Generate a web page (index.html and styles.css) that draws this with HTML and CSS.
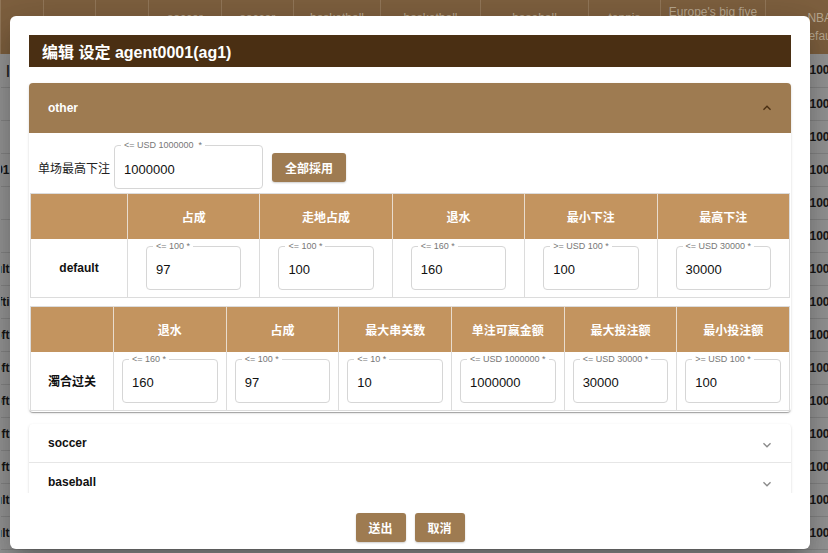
FILE: index.html
```html
<!DOCTYPE html>
<html lang="zh">
<head>
<meta charset="utf-8">
<title>编辑 设定</title>
<link rel="stylesheet" href="styles.css">
</head>
<body>
<div class="page">
  <table class="bg">
    <colgroup>
      <col class="c43"><col class="c52"><col class="c53"><col class="c73"><col class="c72"><col class="c87"><col class="c100"><col class="c108"><col class="c72"><col class="c105"><col class="c108">
    </colgroup>
    <thead>
      <tr>
        <th></th><th>ID</th><th>名称</th><th>soccer<br>default</th><th>soccer<br>default</th><th>basketball<br>default</th><th>basketball<br>default</th><th>baseball<br>default</th><th>tennis<br>default</th><th class="three">Europe's big five<br>leagues<br>default</th><th>NBA<br>default</th>
      </tr>
    </thead>
    <tbody>
      <tr><td><span class="lft">|</span></td><td></td><td></td><td></td><td></td><td></td><td></td><td></td><td></td><td></td><td>100</td></tr>
      <tr><td></td><td></td><td></td><td></td><td></td><td></td><td></td><td></td><td></td><td></td><td>100</td></tr>
      <tr><td></td><td></td><td></td><td></td><td></td><td></td><td></td><td></td><td></td><td></td><td>100</td></tr>
      <tr><td><span class="lft">agent0001</span></td><td></td><td></td><td></td><td></td><td></td><td></td><td></td><td></td><td></td><td>100</td></tr>
      <tr><td></td><td></td><td></td><td></td><td></td><td></td><td></td><td></td><td></td><td></td><td>100</td></tr>
      <tr><td></td><td></td><td></td><td></td><td></td><td></td><td></td><td></td><td></td><td></td><td>100</td></tr>
      <tr><td><span class="lft">default</span></td><td></td><td></td><td></td><td></td><td></td><td></td><td></td><td></td><td></td><td>100</td></tr>
      <tr><td><span class="lft">softi</span></td><td></td><td></td><td></td><td></td><td></td><td></td><td></td><td></td><td></td><td>100</td></tr>
      <tr><td><span class="lft">soft</span></td><td></td><td></td><td></td><td></td><td></td><td></td><td></td><td></td><td></td><td>100</td></tr>
      <tr><td><span class="lft">soft</span></td><td></td><td></td><td></td><td></td><td></td><td></td><td></td><td></td><td></td><td>100</td></tr>
      <tr><td><span class="lft">soft</span></td><td></td><td></td><td></td><td></td><td></td><td></td><td></td><td></td><td></td><td>100</td></tr>
      <tr><td><span class="lft">ag1@ft</span></td><td></td><td></td><td></td><td></td><td></td><td></td><td></td><td></td><td></td><td>100</td></tr>
      <tr><td><span class="lft">ag2@ft</span></td><td></td><td></td><td></td><td></td><td></td><td></td><td></td><td></td><td></td><td>100</td></tr>
      <tr><td><span class="lft">default</span></td><td></td><td></td><td></td><td></td><td></td><td></td><td></td><td></td><td></td><td>100</td></tr>
      <tr><td><span class="lft">default</span></td><td></td><td></td><td></td><td></td><td></td><td></td><td></td><td></td><td></td><td>100</td></tr>
    </tbody>
  </table>

  <div class="modal">
    <div class="title">编辑 设定 agent0001(ag1)</div>
    <div class="body">
      <div class="acc expanded">
        <div class="acc-head dark">
          <span>other</span>
          <svg class="chev" width="16" height="16" viewBox="0 0 24 24"><path d="M7.41 15.41 12 10.83l4.59 4.58L18 14l-6-6-6 6z" fill="#4a2f13"/></svg>
        </div>
        <div class="acc-panel">
          <div class="top-row">
            <span class="lbl">单场最高下注</span>
            <div class="field wide"><span class="legend">&lt;= USD 1000000 &nbsp;*</span><span class="val">1000000</span></div>
            <button class="btn">全部採用</button>
          </div>
          <table class="grid t1">
            <colgroup><col class="first1"><col><col><col><col><col></colgroup>
            <tr class="hd"><th></th><th>占成</th><th>走地占成</th><th>退水</th><th>最小下注</th><th>最高下注</th></tr>
            <tr class="bd">
              <td class="rowname">default</td>
              <td><div class="field"><span class="legend">&lt;= 100 *</span><span class="val">97</span></div></td>
              <td><div class="field"><span class="legend">&lt;= 100 *</span><span class="val">100</span></div></td>
              <td><div class="field"><span class="legend">&lt;= 160 *</span><span class="val">160</span></div></td>
              <td><div class="field"><span class="legend">&gt;= USD 100 *</span><span class="val">100</span></div></td>
              <td><div class="field"><span class="legend">&lt;= USD 30000 *</span><span class="val">30000</span></div></td>
            </tr>
          </table>
          <table class="grid t2">
            <colgroup><col class="first2"><col><col><col><col><col><col></colgroup>
            <tr class="hd"><th></th><th>退水</th><th>占成</th><th>最大串关数</th><th>单注可赢金额</th><th>最大投注额</th><th>最小投注额</th></tr>
            <tr class="bd">
              <td class="rowname">濁合过关</td>
              <td><div class="field"><span class="legend">&lt;= 160 *</span><span class="val">160</span></div></td>
              <td><div class="field"><span class="legend">&lt;= 100 *</span><span class="val">97</span></div></td>
              <td><div class="field"><span class="legend">&lt;= 10 *</span><span class="val">10</span></div></td>
              <td><div class="field"><span class="legend">&lt;= USD 1000000 *</span><span class="val">1000000</span></div></td>
              <td><div class="field"><span class="legend">&lt;= USD 30000 *</span><span class="val">30000</span></div></td>
              <td><div class="field"><span class="legend">&gt;= USD 100 *</span><span class="val">100</span></div></td>
            </tr>
          </table>
        </div>
      </div>
      <div class="acc collapsed">
        <div class="acc-head light">
          <span>soccer</span>
          <svg class="chev" width="16" height="16" viewBox="0 0 24 24"><path d="M7.41 8.59 12 13.17l4.59-4.58L18 10l-6 6-6-6z" fill="#8a8a8a"/></svg>
        </div>
        <div class="acc-head light divided">
          <span>baseball</span>
          <svg class="chev" width="16" height="16" viewBox="0 0 24 24"><path d="M7.41 8.59 12 13.17l4.59-4.58L18 10l-6 6-6-6z" fill="#8a8a8a"/></svg>
        </div>
      </div>
    </div>
    <div class="footer">
      <button class="btn">送出</button>
      <button class="btn">取消</button>
    </div>
  </div>
</div>
</body>
</html>
```
FILE: styles.css
```css
* { box-sizing: border-box; }
html, body { margin: 0; padding: 0; }
body {
  width: 828px;
  height: 553px;
  overflow: hidden;
  font-family: "Liberation Sans", "Noto Sans CJK SC", sans-serif;
  background: #979797;
}
.page {
  position: relative;
  width: 828px;
  height: 553px;
  overflow: hidden;
}

/* dimmed background table */
.bg {
  border-collapse: collapse;
  table-layout: fixed;
  width: 873px;
}
.c43 { width: 43px; } .c52 { width: 52px; } .c53 { width: 53px; }
.c73 { width: 73px; } .c72 { width: 72px; } .c87 { width: 87px; }
.c100 { width: 100px; } .c108 { width: 108px; } .c105 { width: 105px; }
.bg th {
  height: 54px;
  background: #7e603f;
  color: #b8a78f;
  font-size: 12px;
  font-weight: normal;
  line-height: 18px;
  border-left: 1px solid #927759;
  text-align: center;
  vertical-align: middle;
  padding: 0;
}
.bg th.three { line-height: 15px; font-size: 12px; }
.bg td {
  height: 33px;
  background: #979797;
  border-bottom: 1px solid #858585;
  color: #161616;
  font-size: 12px;
  font-weight: bold;
  text-align: center;
  overflow: hidden;
  white-space: nowrap;
  padding: 0;
}
.lft {
  display: flex;
  justify-content: flex-end;
  width: 9px;
  white-space: nowrap;
}

/* modal */
.modal {
  position: absolute;
  left: 10px;
  top: 16px;
  width: 800px;
  height: 533px;
  background: #fff;
  border-radius: 6px;
  padding: 19px 19px 0;
  box-shadow: 0 11px 15px -7px rgba(0,0,0,.2), 0 24px 38px 3px rgba(0,0,0,.14), 0 9px 46px 8px rgba(0,0,0,.12);
  display: flex;
  flex-direction: column;
}
.title {
  height: 32px;
  background: #4a2f13;
  color: #fff;
  font-size: 16px;
  font-weight: bold;
  display: flex;
  align-items: center;
  padding-left: 13px;
  flex: none;
}
.body {
  height: 426px;
  flex: none;
  overflow: hidden;
  margin: 0 -19px;
  padding: 16px 19px 0;
}
.acc {
  border-radius: 4px;
  background: #fff;
  box-shadow: 0 2px 1px -1px rgba(0,0,0,.2), 0 1px 1px 0 rgba(0,0,0,.14), 0 1px 3px 0 rgba(0,0,0,.12);
}
.acc.expanded { margin-bottom: 12px; }
.acc-head {
  display: flex;
  align-items: center;
  justify-content: space-between;
  padding: 0 16px 0 19px;
  font-size: 12px;
  font-weight: bold;
}
.acc-head.dark {
  height: 50px;
  background: #9e7b51;
  color: #fff;
  border-radius: 4px 4px 0 0;
  padding-bottom: 1px;
}
.acc-head.light {
  height: 38px;
  color: #111;
}
.acc-head.light .chev { margin-top: 4px; }
.acc-head.divided { border-top: 1px solid #e6e6e6; }
.chev { display: block; }

.acc-panel { padding: 12px 1px 1px; }
.top-row {
  display: flex;
  align-items: center;
  gap: 9px;
  padding-left: 8px;
  margin-bottom: 4px;
}
.lbl { font-size: 12px; color: #222; margin-right: -5px; }
.btn {
  background: #9e7b51;
  color: #fff;
  border: none;
  border-radius: 3px;
  font-family: inherit;
  font-size: 12px;
  font-weight: bold;
  height: 29px;
  padding: 0 12px;
  box-shadow: 0 1px 2px rgba(0,0,0,.2);
}
.top-row .btn { width: 74px; height: 29px; }

.field {
  position: relative;
  height: 44px;
  border: 1px solid #d6d6d6;
  border-radius: 4px;
  display: flex;
  align-items: center;
  padding: 4px 0 0 9px;
  text-align: left;
}
.field.wide { width: 149px; }
.legend {
  position: absolute;
  left: 6px;
  top: -6px;
  font-size: 9px;
  line-height: 11px;
  color: #777;
  background: #fff;
  padding: 0 3px;
  white-space: nowrap;
}
.val { font-size: 13px; color: #111; }

.grid {
  width: 100%;
  border-collapse: collapse;
  table-layout: fixed;
  border: 1px solid #dcdcdc;
}
.t2 { margin-top: 8px; }
.first1 { width: 97px; }
.first2 { width: 83px; }
.grid .hd th {
  height: 45px;
  background: #c3945f;
  color: #fff;
  font-size: 12px;
  font-weight: bold;
  border-left: 1px solid #e9dccd;
  padding: 0;
}
.grid .hd th:first-child { border-left: none; }
.grid .bd td {
  height: 59px;
  border-left: 1px solid #dcdcdc;
  padding: 0 18px;
  text-align: center;
}
.grid .bd td:first-child { border-left: none; }
.t2 .bd td { padding: 0 8px; }
.rowname { font-size: 12px; font-weight: bold; color: #111; }

.footer {
  display: flex;
  justify-content: center;
  gap: 9px;
  padding-top: 20px;
}
.footer .btn { width: 50px; }
```
